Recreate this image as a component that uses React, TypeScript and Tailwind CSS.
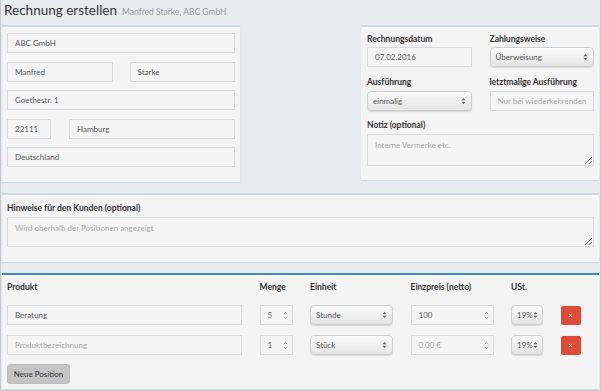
import React from "react";

const inputBase =
  "h-[20px] border border-[#d9dbdf] bg-[#f5f5f5] flex items-center px-[7px] text-[8px] leading-none whitespace-nowrap overflow-hidden";

function Field({ value, placeholder, className = "" }: { value?: string; placeholder?: string; className?: string }) {
  return (
    <div className={`${inputBase} ${value ? "text-[#555]" : "text-[#aaa]"} ${className}`}>
      <span>{value ?? placeholder}</span>
    </div>
  );
}

function SelectArrows() {
  return (
    <svg width="5" height="8" viewBox="0 0 5 8" className="shrink-0">
      <path d="M0.5 3.2 L2.5 0.8 L4.5 3.2 Z" fill="#666" />
      <path d="M0.5 4.8 L2.5 7.2 L4.5 4.8 Z" fill="#666" />
    </svg>
  );
}

function Spinner() {
  return (
    <svg width="5" height="9" viewBox="0 0 5 9" className="shrink-0">
      <path d="M0.8 3.2 L2.5 1.2 L4.2 3.2" fill="none" stroke="#999" strokeWidth="0.8" />
      <path d="M0.8 5.8 L2.5 7.8 L4.2 5.8" fill="none" stroke="#999" strokeWidth="0.8" />
    </svg>
  );
}

function Select({ value, className = "" }: { value: string; className?: string }) {
  return (
    <div
      className={`h-[20px] rounded-[4px] border border-[#cfcfcf] bg-gradient-to-b from-[#fbfbfb] to-[#e4e4e4] shadow-[0_1px_1px_rgba(0,0,0,0.12)] flex items-center justify-between pl-[5px] pr-[5px] text-[8px] text-[#555] whitespace-nowrap ${className}`}
    >
      <span>{value}</span>
      <SelectArrows />
    </div>
  );
}

function NumberField({ value, placeholder, className = "" }: { value?: string; placeholder?: string; className?: string }) {
  return (
    <div
      className={`${inputBase} justify-between pr-[4px] ${value ? "text-[#555]" : "text-[#aaa]"} ${className}`}
    >
      <span>{value ?? placeholder}</span>
      <Spinner />
    </div>
  );
}

function Label({ children }: { children: React.ReactNode }) {
  return <div className="h-[12px] leading-[12px] text-[8.5px] font-bold text-[#333] whitespace-nowrap">{children}</div>;
}

function TextArea({ placeholder, className = "" }: { placeholder: string; className?: string }) {
  return (
    <textarea
      readOnly
      placeholder={placeholder}
      className={`block w-full border border-[#d9dbdf] bg-[#f5f5f5] px-[7px] pt-[5px] text-[8px] leading-[10px] text-[#555] placeholder:text-[#aaa] outline-none ${className}`}
    />
  );
}

export default function App() {
  return (
    <div className="w-[601px] h-[391px] overflow-hidden bg-[#e8ebef] border-x border-b border-[#c5c9ce] px-[1px] font-['Lato',sans-serif]">
      {/* Title */}
      <div className="h-[25px] flex items-baseline gap-[5px] pl-[2px] pt-[1px]">
        <span className="text-[13.5px] text-[#333] leading-[18px]">Rechnung erstellen</span>
        <span className="text-[8.5px] text-[#999]">Manfred Starke, ABC GmbH</span>
      </div>

      {/* Top row */}
      <div className="flex justify-between items-start">
        <div className="w-[238px] bg-[#f4f4f4] border-t-2 border-[#d2d6de] shadow-[0_1px_1px_rgba(0,0,0,0.08)] pt-[6px] px-[5px] pb-[15px] flex flex-col gap-[8.5px]">
          <Field value="ABC GmbH" />
          <div className="grid grid-cols-2 gap-[17px]">
            <Field value="Manfred" />
            <Field value="Starke" />
          </div>
          <Field value="Goethestr. 1" />
          <div className="flex gap-[18px]">
            <Field value="22111" className="w-[44px]" />
            <Field value="Hamburg" className="flex-1" />
          </div>
          <Field value="Deutschland" />
        </div>

        <div className="w-[238px] bg-[#f4f4f4] border-t-2 border-[#d2d6de] shadow-[0_1px_1px_rgba(0,0,0,0.08)] pt-[6px] pl-[6px] pr-[5px] pb-[14px]">
          <div className="grid grid-cols-2 gap-x-[18px]">
            <div>
              <Label>Rechnungsdatum</Label>
              <Field value="07.02.2016" className="mt-[2px]" />
            </div>
            <div>
              <Label>Zahlungsweise</Label>
              <Select value="Überweisung" className="mt-[2px]" />
            </div>
            <div className="mt-[9px]">
              <Label>Ausführung</Label>
              <Select value="einmalig" className="mt-[3px] h-[19px]" />
            </div>
            <div className="mt-[9px]">
              <Label>letztmalige Ausführung</Label>
              <Field placeholder="Nur bei wiederkehrenden" className="mt-[3px] h-[19px]" />
            </div>
          </div>
          <div className="mt-[8px]">
            <Label>Notiz (optional)</Label>
            <TextArea placeholder="Interne Vermerke etc." className="mt-[3px] h-[32px]" />
          </div>
        </div>
      </div>

      {/* Hints */}
      <div className="mt-[11px] bg-[#f4f4f4] border-t-2 border-[#d2d6de] shadow-[0_1px_1px_rgba(0,0,0,0.08)] pt-[7px] px-[5px] pb-[15px]">
        <Label>Hinweise für den Kunden (optional)</Label>
        <TextArea placeholder="Wird oberhalb der Positionen angezeigt" className="mt-[3px] h-[30px]" />
      </div>

      {/* Products */}
      <div className="mt-[11px] bg-[#f4f4f4] border-t-2 border-[#3c8dbc] shadow-[0_1px_1px_rgba(0,0,0,0.08)] pt-[6px] px-[5px] pb-[5px]">
        <div className="grid grid-cols-[235px_33px_83px_83px_32px_20px] gap-x-[17.5px] items-center">
          <Label>Produkt</Label>
          <Label>Menge</Label>
          <Label>Einheit</Label>
          <Label>Einzpreis (netto)</Label>
          <Label>USt.</Label>
          <div />
        </div>
        <div className="mt-[12px] grid grid-cols-[235px_33px_83px_83px_32px_20px] gap-x-[17.5px] gap-y-[10px] items-center">
          <Field value="Beratung" className="h-[19px]" />
          <NumberField value="5" className="h-[19px]" />
          <Select value="Stunde" className="h-[19px]" />
          <NumberField value="100" className="h-[19px]" />
          <Select value="19%" className="h-[19px] pl-[4px] pr-[4px]" />
          <div className="h-[19px] rounded-[2px] bg-[#dd4b39] flex items-center justify-center text-white text-[7px] leading-none">×</div>

          <Field placeholder="Produktbezeichnung" className="h-[19px]" />
          <NumberField value="1" className="h-[19px]" />
          <Select value="Stück" className="h-[19px]" />
          <NumberField placeholder="0.00 €" className="h-[19px]" />
          <Select value="19%" className="h-[19px] pl-[4px] pr-[4px]" />
          <div className="h-[19px] rounded-[2px] bg-[#dd4b39] flex items-center justify-center text-white text-[7px] leading-none">×</div>
        </div>
        <div className="mt-[9px] w-[63px] h-[20px] rounded-[3px] bg-[#c4c4c4] border border-[#bcbcbc] flex items-center justify-center text-[8px] text-[#333]">
          Neue Position
        </div>
      </div>
    </div>
  );
}
